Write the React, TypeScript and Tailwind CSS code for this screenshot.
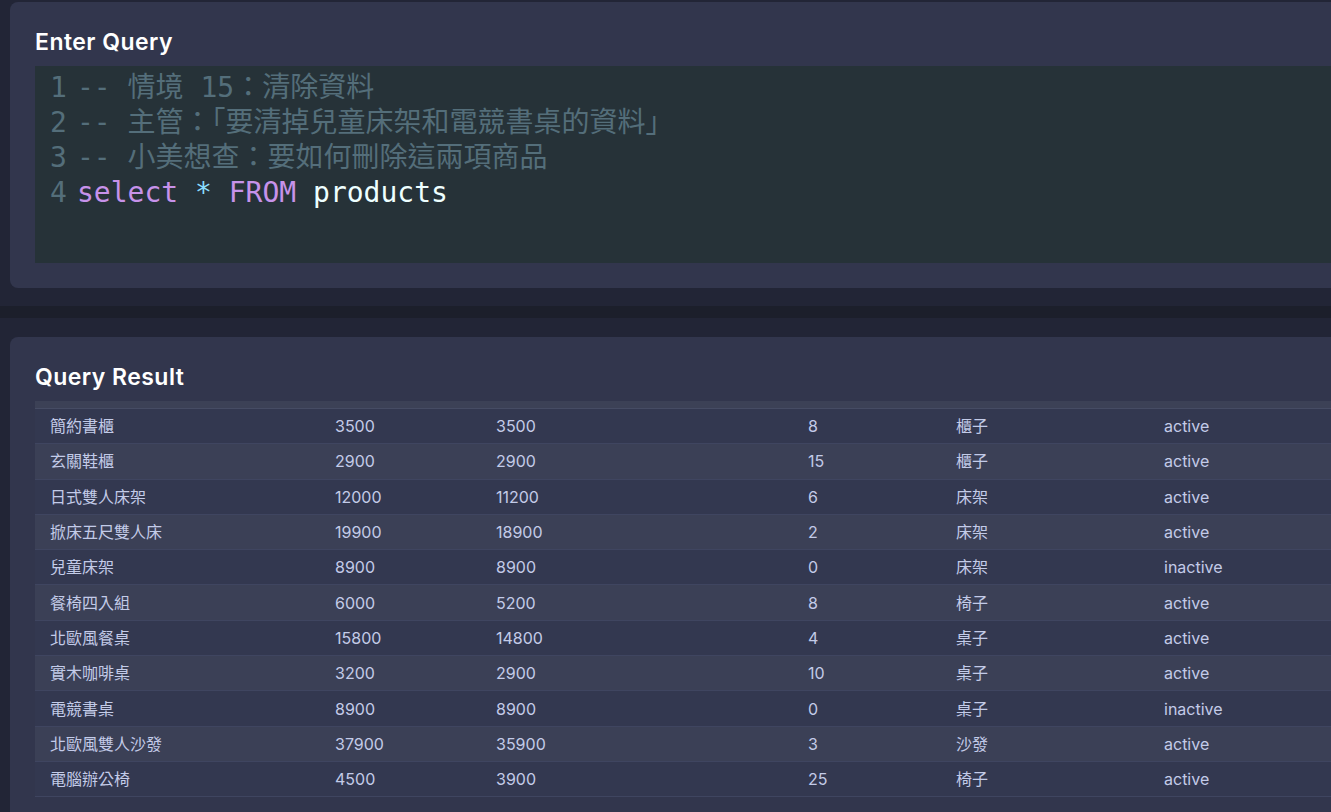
const rows: [string, string, string, string, string, string][] = [
  ["簡約書櫃", "3500", "3500", "8", "櫃子", "active"],
  ["玄關鞋櫃", "2900", "2900", "15", "櫃子", "active"],
  ["日式雙人床架", "12000", "11200", "6", "床架", "active"],
  ["掀床五尺雙人床", "19900", "18900", "2", "床架", "active"],
  ["兒童床架", "8900", "8900", "0", "床架", "inactive"],
  ["餐椅四入組", "6000", "5200", "8", "椅子", "active"],
  ["北歐風餐桌", "15800", "14800", "4", "桌子", "active"],
  ["實木咖啡桌", "3200", "2900", "10", "桌子", "active"],
  ["電競書桌", "8900", "8900", "0", "桌子", "inactive"],
  ["北歐風雙人沙發", "37900", "35900", "3", "沙發", "active"],
  ["電腦辦公椅", "4500", "3900", "25", "椅子", "active"],
];

const sans = "font-['Inter','Noto_Sans_CJK_TC',sans-serif]";
const mono = "font-['DejaVu_Sans_Mono','Noto_Sans_CJK_TC',monospace]";

function CodeLine({ n, children }: { n: number; children: React.ReactNode }) {
  return (
    <div className="flex h-[35px] items-center whitespace-pre">
      <span className="w-[42px] shrink-0 pl-[15px] text-[#546e7a]">{n}</span>
      <span>{children}</span>
    </div>
  );
}

export default function App() {
  return (
    <div className={`h-[812px] w-[1331px] overflow-hidden bg-[#222536] ${sans}`}>
      <section className="h-[306px] pt-[2px] pl-[10px]">
        <div className="rounded-l-lg bg-[#32364d] pl-[25px] pt-[25px] pb-[25px]">
          <h2 className="h-[39px] text-[23px] font-semibold leading-[30px] tracking-[0.02em] text-white">
            Enter Query
          </h2>
          <div className={`h-[197px] bg-[#263238] pt-[4px] text-[28px] ${mono}`}>
            <CodeLine n={1}>
              <span className="text-[#546e7a]">-- 情境 15：清除資料</span>
            </CodeLine>
            <CodeLine n={2}>
              <span className="text-[#546e7a]">-- 主管：「要清掉兒童床架和電競書桌的資料」</span>
            </CodeLine>
            <CodeLine n={3}>
              <span className="text-[#546e7a]">-- 小美想查：要如何刪除這兩項商品</span>
            </CodeLine>
            <CodeLine n={4}>
              <span className="text-[#c792ea]">select</span>{" "}
              <span className="text-[#89ddff]">*</span>{" "}
              <span className="text-[#c792ea]">FROM</span>{" "}
              <span className="text-[#eeffff]">products</span>
            </CodeLine>
          </div>
        </div>
      </section>

      <div className="h-[12px] bg-[#1c1f2b]" />

      <section className="pt-[19px] pl-[10px]">
        <div className="rounded-l-lg bg-[#32364d] pl-[25px] pt-[25px] pb-[25px]">
          <h2 className="h-[39px] text-[23px] font-semibold leading-[30px] tracking-[0.02em] text-white">
            Query Result
          </h2>
          <div className="text-[16px] text-[#c3cbe8]">
            <div className="h-[8px] border-b border-[#464c64] bg-[#3c4156]" />
            {rows.map((r, i) => (
              <div
                key={r[0]}
                className={`grid h-[35.3px] grid-cols-[285px_161px_312px_148px_208px_1fr] items-center border-b border-[#3f4560] ${
                  i % 2 === 0 ? "bg-[#333850]" : "bg-[#3b4056]"
                }`}
              >
                {r.map((c, j) => (
                  <span key={j} className="pl-[15px]">
                    {c}
                  </span>
                ))}
              </div>
            ))}
          </div>
        </div>
      </section>
    </div>
  );
}
